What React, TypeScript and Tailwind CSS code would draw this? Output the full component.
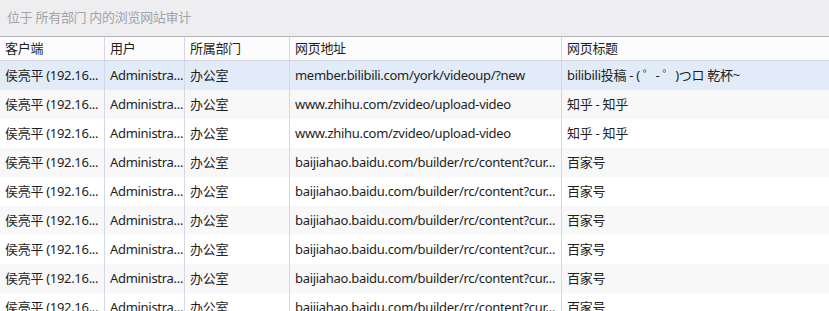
import React from 'react';

interface Row {
  client: string;
  user: string;
  dept: string;
  url: string;
  title: string;
}

const rows: Row[] = [
  { client: '侯亮平 (192.16...', user: 'Administra...', dept: '办公室', url: 'member.bilibili.com/york/videoup/?new', title: 'bilibili投稿 - ( ゜- ゜)つロ 乾杯~' },
  { client: '侯亮平 (192.16...', user: 'Administra...', dept: '办公室', url: 'www.zhihu.com/zvideo/upload-video', title: '知乎 - 知乎' },
  { client: '侯亮平 (192.16...', user: 'Administra...', dept: '办公室', url: 'www.zhihu.com/zvideo/upload-video', title: '知乎 - 知乎' },
  { client: '侯亮平 (192.16...', user: 'Administra...', dept: '办公室', url: 'baijiahao.baidu.com/builder/rc/content?cur...', title: '百家号' },
  { client: '侯亮平 (192.16...', user: 'Administra...', dept: '办公室', url: 'baijiahao.baidu.com/builder/rc/content?cur...', title: '百家号' },
  { client: '侯亮平 (192.16...', user: 'Administra...', dept: '办公室', url: 'baijiahao.baidu.com/builder/rc/content?cur...', title: '百家号' },
  { client: '侯亮平 (192.16...', user: 'Administra...', dept: '办公室', url: 'baijiahao.baidu.com/builder/rc/content?cur...', title: '百家号' },
  { client: '侯亮平 (192.16...', user: 'Administra...', dept: '办公室', url: 'baijiahao.baidu.com/builder/rc/content?cur...', title: '百家号' },
  { client: '侯亮平 (192.16...', user: 'Administra...', dept: '办公室', url: 'baijiahao.baidu.com/builder/rc/content?cur...', title: '百家号' },
];

const cols = 'grid grid-cols-[105px_80px_105px_272px_1fr]';
const cell = 'overflow-hidden whitespace-nowrap pl-[5px] border-r border-[#d6d6e4]';

export default function App() {
  return (
    <div className="h-[311px] w-[829px] overflow-hidden bg-white text-[13px] tracking-[-0.3px] text-[#1e1e1e] [font-family:'Noto_Sans','Noto_Sans_CJK_SC',sans-serif]">
      <div className="flex h-[36px] items-center bg-[#eeeef1] pl-[7px] text-[#a3a3a8]">
        位于 所有部门 内的浏览网站审计
      </div>
      <div>
        <div className={`${cols} h-[25px] items-center border-t border-b border-t-[#b4b4ba] border-b-[#d6d6e4] bg-[#fcfcfc]`}>
          <div className={`${cell} leading-[23px]`}>客户端</div>
          <div className={`${cell} leading-[23px]`}>用户</div>
          <div className={`${cell} leading-[23px]`}>所属部门</div>
          <div className={`${cell} leading-[23px]`}>网页地址</div>
          <div className="pl-[5px] leading-[23px]">网页标题</div>
        </div>
        {rows.map((row, i) => (
          <div
            key={i}
            className={`${cols} h-[29px] items-stretch ${i === 0 ? 'bg-[#e2ecf8]' : i % 2 === 1 ? 'bg-[#f8f8f9]' : 'bg-white'}`}
          >
            <div className={`${cell} leading-[29px]`}>{row.client}</div>
            <div className={`${cell} leading-[29px]`}>{row.user}</div>
            <div className={`${cell} leading-[29px]`}>{row.dept}</div>
            <div className={`${cell} leading-[29px]`}>{row.url}</div>
            <div className="overflow-hidden whitespace-nowrap pl-[5px] leading-[29px]">{row.title}</div>
          </div>
        ))}
      </div>
    </div>
  );
}
